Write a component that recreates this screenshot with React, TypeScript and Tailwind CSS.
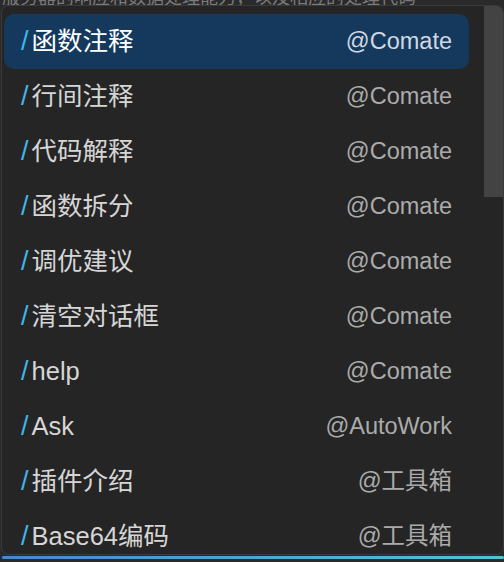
import React from 'react'

interface Command {
  name: string
  agent: string
}

const COMMANDS: Command[] = [
  { name: '函数注释', agent: '@Comate' },
  { name: '行间注释', agent: '@Comate' },
  { name: '代码解释', agent: '@Comate' },
  { name: '函数拆分', agent: '@Comate' },
  { name: '调优建议', agent: '@Comate' },
  { name: '清空对话框', agent: '@Comate' },
  { name: 'help', agent: '@Comate' },
  { name: 'Ask', agent: '@AutoWork' },
  { name: '插件介绍', agent: '@工具箱' },
  { name: 'Base64编码', agent: '@工具箱' },
]

const FONT = { fontFamily: '"Liberation Sans", "Noto Sans CJK SC", sans-serif' }

export default function App() {
  const selected = 0

  return (
    <div className="w-[504px] h-[562px] bg-[#2a2a2a] overflow-hidden flex flex-col" style={FONT}>
      {/* 上方被遮住的一行文字 */}
      <div className="h-[5px] overflow-hidden pl-[2px]">
        <div className="-mt-[15px] text-[18px] text-[#7a7a7a] whitespace-nowrap">
          服务器的响应和数据处理能力，以及相应的处理代码
        </div>
      </div>

      <div className="h-[550px] ml-[1px] border border-[#3a3a3a] rounded-[8px] bg-[#252525] overflow-hidden flex justify-between">
        <div className="pt-[8px] pl-[2px] flex flex-col">
          {COMMANDS.map(({ name, agent }, i: number) => (
            <div
              key={name}
              className={`w-[465px] h-[55px] shrink-0 flex items-center justify-between pl-[16px] pr-[17px] rounded-[10px] ${
                i === selected ? 'bg-[#14395d]' : ''
              }`}
            >
              <span className={`flex items-center text-[25.5px] ${i === selected ? 'text-white' : 'text-[#d6d6d6]'}`}>
                <span className="text-[#3fb8e8] text-[27px] ml-[1px] mr-[3px]">/</span>
                {name}
              </span>
              <span className={`text-[23.5px] ${i === selected ? 'text-[#cfd8e3]' : 'text-[#ababab]'}`}>{agent}</span>
            </div>
          ))}
        </div>
        {/* 滚动条 */}
        <div className="w-[19px] h-[191px] bg-[#434343] shrink-0" />
      </div>

      <div className="mt-[1px] h-[3px] ml-[2px] rounded-full bg-gradient-to-r from-[#4a86cf] to-[#4ec6d2]" />
    </div>
  )
}
